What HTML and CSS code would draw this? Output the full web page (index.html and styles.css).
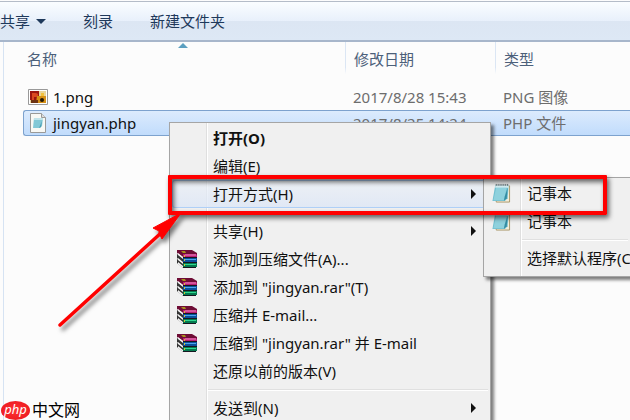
FILE: index.html
```html
<!DOCTYPE html>
<html lang="zh-CN">
<head>
    <meta charset="UTF-8">
    <meta name="viewport" content="width=device-width, initial-scale=1.0">
    <title>jingyan.php</title>
    <link rel="stylesheet" href="styles.css">
</head>
<body>
    <svg class="symbols" aria-hidden="true">
        <symbol id="rar" viewBox="0 0 20 20">
            <path d="M0 1h15l5 3v4H6L0 4z" fill="#6e0c35"/>
            <path d="M6 5h13l1 1v2H6z" fill="#b81d74"/>
            <path d="M8 6h11" stroke="#f08ac0"/>
            <path d="M0 5l6 4v5l-6-5zM0 10l6 4v5l-6-5z" fill="#333"/>
            <path d="M6 8h14v1H6zM6 13h14v1H6zM6 18h13v1H6z" fill="#161620"/>
            <path d="M6 9h14v4H6z" fill="#0b4f9c"/>
            <path d="M8 10.500h11" stroke="#4aa6ea"/>
            <path d="M6 14h14v4H6z" fill="#04794f"/>
            <path d="M8 15.500h11" stroke="#30d890"/>
            <path d="M1 4l5 4v2L1 6zM1 9l5 4v2l-5-4zM1 13l5 4v2l-5-4z" fill="#f4f4f4"/>
            <path d="M4 2h4l1 2H6z" fill="#a8901c"/>
            <path d="M7.500 6v2M7.500 10v2M7.500 15v2" stroke="#d8c030"/>
        </symbol>
        <symbol id="notepad" viewBox="0 0 20 21">
            <path d="M5 3h14v17H5z" fill="#f4eedb" stroke="#a99768"/>
            <path d="M4 2h14l-1 14-3 3H1z" fill="#72c0d0"/>
            <path d="M4 2h14v3H4z" fill="#d5eef2"/>
            <path d="M5 5h11l-3 13H2z" fill="#98d7e2" opacity=".75"/>
            <path d="M17 5l-1 11-3 3 1-5z" fill="#358da3"/>
            <path d="M5 1v2M7 1v2M9 1v2M11 1v2M13 1v2M15 1v2M17 1v2" stroke="#59656a"/>
        </symbol>
    </svg>

    <div class="toolbar">
        <button>共享 <span class="caret"></span></button>
        <button>刻录</button>
        <button>新建文件夹</button>
    </div>

    <div class="explorer">
        <table class="files">
            <thead>
                <tr>
                    <th class="name">名称<span class="sort"></span></th>
                    <th class="date">修改日期</th>
                    <th class="type">类型</th>
                </tr>
            </thead>
            <tbody>
                <tr>
                    <td>
                        <div class="file">
                            <svg class="file-icon" viewBox="0 0 20 20">
                                <path d="M.5 2.500h19v15H.5z" fill="#fff" stroke="#999"/>
                                <path d="M2 4h16v12H2z" fill="#e9d59a"/>
                                <path d="M2 4h9v9H2z" fill="#9d1710"/>
                                <path d="M4 6h3q3 0 3 2t-3 2H6v3H4z" fill="#dc4a20"/>
                                <path d="M9 9h9v7H8z" fill="#d69016"/>
                                <path d="M3 13h7v3H3z" fill="#6d3212"/>
                                <circle cx="14" cy="13" r="2" fill="#201608"/>
                                <path d="M13 6h3v3h-3z" fill="#f3c13b"/>
                            </svg>
                            1.png
                        </div>
                    </td>
                    <td>2017/8/28 15:43</td>
                    <td>PNG 图像</td>
                </tr>
                <tr class="selected">
                    <td>
                        <div class="file">
                            <svg class="file-icon" viewBox="0 0 20 20">
                                <path d="M2.500.5h11l4 4v15h-15z" fill="#f8f8f4" stroke="#9a9a98"/>
                                <path d="M13.500.5v4h4" fill="#ddd" stroke="#9a9a98"/>
                                <path d="M6 5h9l-1 8-2 2H5z" fill="#82c8d6"/>
                                <path d="M6 5h9v2H6z" fill="#bfe3ea"/>
                                <path d="M14 8l-1 6-2 1z" fill="#4b9db2"/>
                            </svg>
                            jingyan.php
                        </div>
                    </td>
                    <td>2017/8/25 14:24</td>
                    <td>PHP 文件</td>
                </tr>
            </tbody>
        </table>
    </div>

    <div class="menu context-menu">
        <button class="item default"><span class="icon"></span>打开(O)</button>
        <button class="item"><span class="icon"></span>编辑(E)</button>
        <button class="item has-sub active"><span class="icon"></span>打开方式(H)</button>
        <hr>
        <button class="item has-sub"><span class="icon"></span>共享(H)</button>
        <button class="item"><svg class="icon"><use href="#rar"/></svg>添加到压缩文件(A)...</button>
        <button class="item"><svg class="icon"><use href="#rar"/></svg>添加到 "jingyan.rar"(T)</button>
        <button class="item"><svg class="icon"><use href="#rar"/></svg>压缩并 E-mail...</button>
        <button class="item"><svg class="icon"><use href="#rar"/></svg>压缩到 "jingyan.rar" 并 E-mail</button>
        <button class="item"><span class="icon"></span>还原以前的版本(V)</button>
        <hr>
        <button class="item has-sub"><span class="icon"></span>发送到(N)</button>
    </div>

    <div class="menu submenu">
        <button class="item"><svg class="icon"><use href="#notepad"/></svg>记事本</button>
        <button class="item"><svg class="icon"><use href="#notepad"/></svg>记事本</button>
        <hr>
        <button class="item"><span class="icon"></span>选择默认程序(C</button>
    </div>

    <div class="highlight"></div>
    <svg class="arrow" viewBox="0 0 130 120">
        <path d="M5 112L106 20" stroke="#f00" stroke-width="3.500" stroke-linecap="round"/>
        <path d="M126 0L98 15l6 3 0 2 3 6z" fill="#f00" stroke="#f00"/>
    </svg>

    <div class="logo"><span class="badge">php</span>中文网</div>
</body>
</html>
```
FILE: styles.css
```css
body {
    margin: 0;
    min-height: 100vh;
    overflow: hidden;
    display: flex;
    flex-direction: column;
    position: relative;
    background-color: #fcfcfc;
    font-family: "Noto Sans", "Noto Sans CJK SC", sans-serif;
    font-size: 15px;
    line-height: 20px;
}
button {
    border: none;
    background: none;
    padding: 0;
    font: inherit;
    color: inherit;
    white-space: nowrap;
}
.symbols {
    display: none;
}

/* toolbar */
.toolbar {
    display: flex;
    align-items: center;
    gap: 37px;
    height: 38px;
    margin-top: 1px;
    border-top: 1px solid #b4bcc8;
    border-bottom: 2px solid #a7b6cb;
    background: linear-gradient(#fafdff, #e8f0fb 50%, #dce6f3 51%, #dde8f5);
    color: #1e395b;
}
.caret {
    display: inline-block;
    margin-left: 2px;
    vertical-align: 3px;
    border: 5px solid transparent;
    border-top-color: #1e395b;
    border-bottom: none;
}

/* file list */
.explorer {
    flex: 1;
    margin-left: 3px;
    padding-left: 19px;
    border-left: 1px solid #d6e3f3;
}
.files {
    width: 100%;
    table-layout: fixed;
    border-spacing: 0;
    color: #6d6d6d;
}
.files th {
    position: relative;
    height: 34px;
    padding: 0 0 8px 8px;
    text-align: left;
    font-weight: normal;
    color: #4c607a;
    border-left: 1px solid;
    border-image: linear-gradient(#dbe6f4 60%, transparent 75%) 1;
}
.files .name {
    width: 318px;
    padding-left: 4px;
    border: none;
}
.files .date {
    width: 141px;
}
.sort {
    position: absolute;
    left: 48%;
    top: 1px;
    border: 5px solid transparent;
    border-bottom-color: #5b9fc0;
    border-top: none;
}
.files td {
    height: 24px;
    padding: 0 0 0 8px;
    border-top: 1px solid transparent;
    border-bottom: 1px solid transparent;
}
.files td:first-child {
    padding-left: 4px;
    border-left: 1px solid transparent;
    color: #111;
}
.selected td {
    background: linear-gradient(#dcebfd, #c1dcfc);
    border-color: #7da2ce;
}
.selected td:first-child {
    border-color: #7da2ce;
    border-radius: 3px 0 0 3px;
}
.file {
    display: flex;
    align-items: center;
    gap: 5px;
}
.file-icon {
    width: 20px;
    height: 20px;
}

/* menus */
.menu {
    position: absolute;
    display: flex;
    flex-direction: column;
    padding: 1px 2px;
    border: 1px solid #a5a5a5;
    background: linear-gradient(to right, #f0f0f0 36px, #dfdfdf 36px, #dfdfdf 37px, #fff 37px, #fff 38px, #f0f0f0 38px);
    box-shadow: 3px 3px 3px rgba(0, 0, 0, 0.5);
    color: #111;
}
.context-menu {
    left: 169px;
    top: 122px;
    width: 316px;
}
.submenu {
    left: 483px;
    right: 0;
    top: 177px;
    padding-bottom: 4px;
    border-right: none;
}
.item {
    display: flex;
    align-items: center;
    gap: 16px;
    height: 28px;
    padding: 0 12px 0 5px;
    text-align: left;
}
.submenu .item {
    padding-right: 0;
}
.icon {
    width: 20px;
    height: 20px;
    flex: none;
}
.default {
    font-weight: bold;
}
.has-sub::after {
    content: "";
    margin-left: auto;
    border: 5px solid transparent;
    border-left-color: #111;
    border-right: none;
}
.active {
    border-radius: 3px;
    background: linear-gradient(rgba(235, 240, 248, 0.6), rgba(220, 230, 246, 0.8));
    box-shadow: inset 0 0 0 1px #aecff7;
}
.menu hr {
    width: calc(100% - 36px);
    height: 1px;
    box-sizing: border-box;
    margin: 4px 0 4px 36px;
    border: none;
    background-color: #e0e0e0;
    box-shadow: 0 1px #fff;
}

/* annotations */
.highlight {
    position: absolute;
    left: 168px;
    top: 175px;
    width: 431px;
    height: 32px;
    border: 4px solid #f00;
    border-radius: 1px;
    box-shadow: 2px 3px 5px rgba(0, 0, 0, 0.6), inset 2px 3px 5px rgba(0, 0, 0, 0.6);
}
.arrow {
    position: absolute;
    left: 55px;
    top: 213px;
    width: 130px;
    height: 120px;
    filter: drop-shadow(3px 4px 2px rgba(0, 0, 0, 0.5));
}

.logo {
    position: absolute;
    left: 1px;
    bottom: 0;
    display: flex;
    align-items: center;
    gap: 2px;
    font-size: 16px;
    color: #000;
}
.badge {
    width: 29px;
    height: 19px;
    border-radius: 50%;
    background: radial-gradient(#f33, #e8141c);
    color: #fff;
    font-size: 13px;
    font-style: italic;
    line-height: 16px;
    text-align: center;
}
```
